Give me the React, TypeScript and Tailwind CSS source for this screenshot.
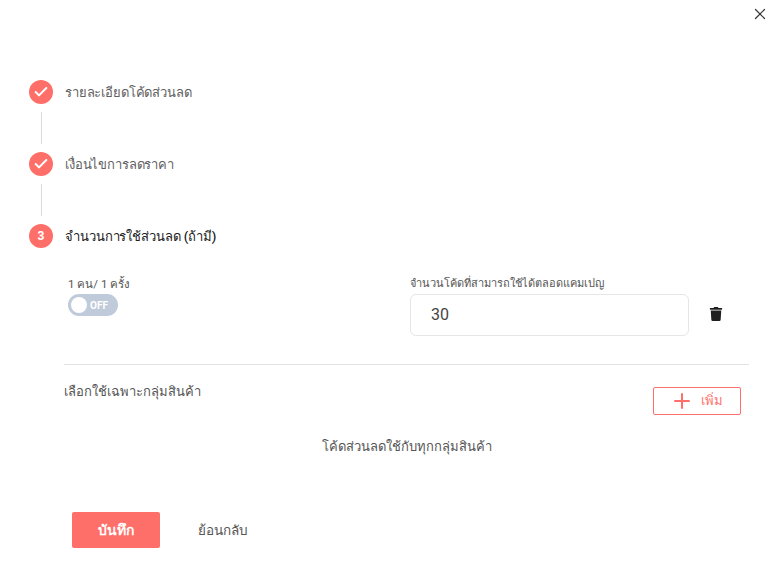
import { Check, Plus, X } from "lucide-react";
import { FaTrash } from "react-icons/fa";

const Step = ({ label, done, num, active }: { label: string; done?: boolean; num?: number; active?: boolean }) => (
  <div className="flex h-6 items-center gap-3">
    <div className="flex h-6 w-6 shrink-0 items-center justify-center rounded-full bg-[#ff6f6a] text-xs font-bold text-white">
      {done ? <Check size={16} strokeWidth={3} /> : num}
    </div>
    <span
      className={
        active
          ? "mt-px text-[13px] font-medium tracking-[-0.1px] text-[#212121]"
          : "mt-px text-[13px] tracking-[-0.15px] text-[#5f5f5f]"
      }
    >
      {label}
    </span>
  </div>
);

const Connector = () => (
  <div className="ml-3 h-12 py-2">
    <div className="h-8 w-px bg-[#d9d9d9]" />
  </div>
);

export default function App() {
  return (
    <div className="flex h-[579px] w-[778px] flex-col overflow-hidden bg-white font-['Roboto','Noto_Sans',sans-serif] text-[#555]">
      <div className="flex h-[80px] justify-end pr-[9px] pt-[5px]">
        <X size={18} strokeWidth={1.6} className="text-[#333]" />
      </div>

      <div className="pl-[29px]">
        <Step done label="รายละเอียดโค้ดส่วนลด" />
        <Connector />
        <Step done label="เงื่อนไขการลดราคา" />
        <Connector />
        <Step num={3} active label="จำนวนการใช้ส่วนลด (ถ้ามี)" />
      </div>

      <div className="ml-[64px] mr-[29px] mt-[28px]">
        <div className="flex border-b border-[#e3e3e3] pb-[28px] pl-1">
          <div className="w-[342px]">
            <div className="h-4 text-[11.5px] leading-4">1 คน/ 1 ครั้ง</div>
            <div className="mt-[2px] flex h-[22px] w-[50px] items-center rounded-full bg-[#bfcbdb] pl-[3px]">
              <div className="h-4 w-4 rounded-full bg-white" />
              <span className="ml-[3px] text-[10px] font-bold text-white">OFF</span>
            </div>
          </div>
          <div className="w-[279px]">
            <div className="h-4 text-[11px] leading-4">จำนวนโค้ดที่สามารถใช้ได้ตลอดแคมเปญ</div>
            <div className="mt-[2px] flex h-[42px] items-center rounded-md border border-[#e6e6e6] pl-5 text-base text-[#444]">
              30
            </div>
          </div>
          <div className="ml-[20px] mt-[31px]">
            <FaTrash size={14} className="text-[#1f1f1f]" />
          </div>
        </div>

        <div className="flex justify-between pr-2 pt-[17px]">
          <span className="text-[13px] leading-5">เลือกใช้เฉพาะกลุ่มสินค้า</span>
          <button className="mt-[5px] flex h-7 w-[88px] items-center justify-center gap-[7px] rounded-[2px] border border-[#ff6f6a] pr-px text-[13px] font-medium text-[#ff6f6a]">
            <Plus size={24} strokeWidth={2} />
            เพิ่ม
          </button>
        </div>

        <div className="mt-[22px] text-center text-[13px] leading-5">โค้ดส่วนลดใช้กับทุกกลุ่มสินค้า</div>
      </div>

      <div className="ml-[72px] mt-[55px] flex items-center gap-[38px]">
        <button className="h-9 w-[88px] rounded-[2px] bg-[#ff6f6a] text-sm font-bold text-white">บันทึก</button>
        <span className="text-[13.5px]">ย้อนกลับ</span>
      </div>
    </div>
  );
}
